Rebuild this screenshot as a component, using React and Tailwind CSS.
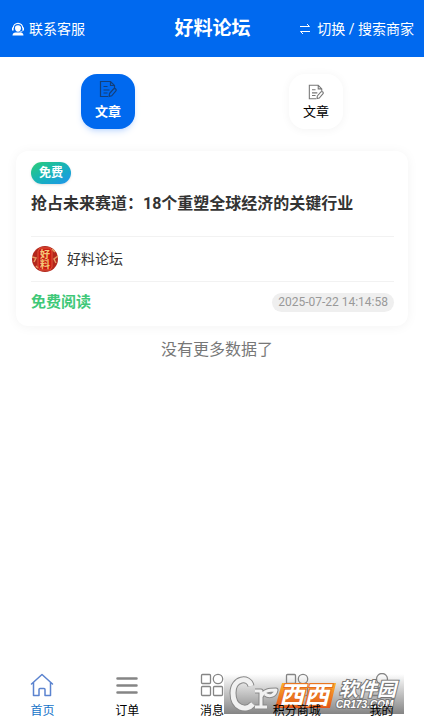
import { clsx } from 'clsx';

const navItems = [
  { label: '首页', icon: HomeIcon, active: true },
  { label: '订单', icon: OrdersIcon },
  { label: '消息', icon: GridIcon },
  { label: '积分商城', icon: GridIcon },
  { label: '我的', icon: UserIcon },
];

function SupportIcon() {
  return (
    <svg className="h-3.5 w-3.5" viewBox="0 0 14 14" fill="none" stroke="currentColor" aria-hidden="true">
      <path d="M2.3 6a4.700 4.700 0 0 1 9.400 0" strokeWidth="1.2" />
      <path d="M4 6.300a3 3 0 0 1 6-.3c0 2-1.300 3.800-3 3.800S4 8.200 4 6.300z" fill="currentColor" stroke="none" />
      <path d="M1.800 5.500v3M12.200 5.500v3" strokeWidth="1.600" />
      <path d="M11.800 8.500c-.6 1.200-1.600 1.500-3 1.500" strokeWidth=".9" />
      <path d="M1.500 13.500c0-2 1.400-2.700 3-3h5c1.600.3 3 1 3 3z" fill="currentColor" stroke="none" />
    </svg>
  );
}

function SwapIcon() {
  return (
    <svg className="h-3 w-3" viewBox="0 0 12 12" fill="none" stroke="currentColor" aria-hidden="true">
      <path d="M1 3.500h9.500L8 1M11 8.500H1.500L4 11" />
    </svg>
  );
}

function ArticleIcon({ className }) {
  return (
    <svg className={className} viewBox="0 0 18 18" fill="none" stroke="currentColor" strokeWidth="1.200" aria-hidden="true">
      <path d="M9 16.500H1.500v-15h10l4 4V8M11.500 1.500v4h4" />
      <path d="M4.500 6.500h4M4.500 10h6M4.500 13h4" />
      <path d="m10.500 13.500 4-4.500q1.200-1 2.200 0t0 2.200l-4 4.600-2.600.6z" />
    </svg>
  );
}

function HomeIcon() {
  return (
    <svg className="h-6 w-6" viewBox="0 0 24 24" fill="none" stroke="currentColor" strokeWidth="1.500" strokeLinejoin="round" strokeLinecap="round" aria-hidden="true">
      <path d="M1.500 11 12 1.500 22.500 11M3.500 9.500v13H9v-6q0-1 1-1h4q1 0 1 1v6h5.500v-13" />
    </svg>
  );
}

function OrdersIcon() {
  return (
    <svg className="h-6 w-6" viewBox="0 0 24 24" stroke="currentColor" strokeWidth="2.500" strokeLinecap="round" aria-hidden="true">
      <path d="M2.500 5.500h19M2.500 12.500h19M2.500 19.500h19" />
    </svg>
  );
}

function GridIcon() {
  return (
    <svg className="h-6 w-6" viewBox="0 0 24 24" fill="none" stroke="currentColor" strokeWidth="1.300" aria-hidden="true">
      <rect x="1.500" y="1.500" width="9" height="9" rx="1" />
      <circle cx="18" cy="6" r="4.700" />
      <rect x="1.500" y="13.500" width="9" height="9" rx="1" />
      <rect x="13.500" y="13.500" width="9" height="9" rx="1" />
    </svg>
  );
}

function UserIcon() {
  return (
    <svg className="h-6 w-6" viewBox="0 0 24 24" fill="none" stroke="currentColor" strokeWidth="1.300" aria-hidden="true">
      <circle cx="12" cy="6" r="5.500" />
      <path d="M2 22.500c0-5 4-8 10-8s10 3 10 8z" />
    </svg>
  );
}

function Avatar() {
  return (
    <svg className="h-7 w-7 rounded-full" viewBox="0 0 28 28" role="img" aria-label="好料论坛">
      <circle cx="14" cy="14" r="13" fill="#b3271c" />
      <path d="M1 12l4 1-2 4M27 11l-4 3 2 4M5 21l2 2M21 4l3 3" stroke="#e69a62" strokeWidth="1.500" fill="none" />
      <path d="M9 3h10l2 3v16l-2 3H9l-2-3V6z" fill="#cb1c12" stroke="#e2543a" />
      <text x="14" y="13" textAnchor="middle" fontSize="10" fontWeight="700" fill="#f4c979">好</text>
      <text x="14" y="23" textAnchor="middle" fontSize="10" fontWeight="700" fill="#f4c979">料</text>
    </svg>
  );
}

function Watermark() {
  return (
    <svg className="pointer-events-none absolute right-5 bottom-2.5 h-10 w-45" viewBox="0 0 180 40" aria-hidden="true">
      <defs>
        <linearGradient id="shade" x2="0" y2="1">
          <stop offset="0" stopColor="#777" stopOpacity="0" />
          <stop offset="1" stopColor="#777" stopOpacity=".9" />
        </linearGradient>
        <linearGradient id="orange" x2="0" y2="1">
          <stop offset="0" stopColor="#fbb02a" />
          <stop offset="1" stopColor="#e4521b" />
        </linearGradient>
      </defs>
      <rect width="180" height="40" fill="url(#shade)" />
      <g fill="none" strokeLinejoin="round">
        <g stroke="#888">
          <path d="M27 12C25 2 9 4 9 19s13 19 20 11" strokeWidth="7" />
          <path d="M31 17h6v16m-6 0h12M37 23c3-7 9-7 15-7-1 6-7 7-11 4" strokeWidth="5" />
        </g>
        <g stroke="#f1f1f1">
          <path d="M27 12C25 2 9 4 9 19s13 19 20 11" strokeWidth="5" />
          <path d="M31 17h6v16m-6 0h12M37 23c3-7 9-7 15-7-1 6-7 7-11 4" strokeWidth="3" />
        </g>
      </g>
      <path d="M58 9h26l-6 25H51zM86 9h26l-6 25H80z" fill="url(#orange)" />
      <g fontWeight="700" fontStyle="italic" stroke="#777" strokeWidth="2" paintOrder="stroke" fill="#fff">
        <text x="55" y="30" fontSize="25" stroke="#e66b1e">西西</text>
        <text x="115" y="22" fontSize="19">软件园</text>
        <text x="112" y="34" fontSize="10" fontFamily="Liberation Sans">CR173.COM</text>
      </g>
    </svg>
  );
}

export default function App() {
  return (
    <div className="flex min-h-screen flex-col bg-white font-['Roboto','Noto_Sans_CJK_SC',sans-serif] text-[#333]">
      <header className="grid h-[57px] grid-cols-[1fr_auto_1fr] items-center bg-[#0069ef] pr-2.5 pl-[11px] text-sm text-white">
        <button type="button" className="flex items-center gap-1 justify-self-start">
          <SupportIcon />
          联系客服
        </button>
        <h1 className="text-[19px] font-bold">好料论坛</h1>
        <button type="button" className="flex items-center gap-1.5 justify-self-end whitespace-nowrap">
          <SwapIcon />
          切换 / 搜索商家
        </button>
      </header>

      <main className="flex-1">
        <div className="grid grid-cols-2 px-1 pt-[17px] text-[13px] text-black">
          <button type="button" className="flex h-[55px] w-[54px] flex-col items-center gap-1 justify-self-center rounded-2xl bg-[#0069ef] pt-1.5 leading-5 font-bold text-white shadow-md shadow-blue-500/20">
            <ArticleIcon className="h-[18px] w-[18px] text-[#123f7b]" />
            文章
          </button>
          <button type="button" className="flex h-[55px] w-[54px] flex-col items-center gap-0.5 justify-self-center rounded-2xl bg-white pt-2.5 leading-5 shadow-[0_1px_10px_#0000000d]">
            <ArticleIcon className="h-4 w-4 text-[#777]" />
            文章
          </button>
        </div>

        <article className="mx-4 mt-[22px] rounded-xl bg-white pt-[11px] pr-3.5 pb-3 pl-[15px] shadow-[0_1px_12px_#0000000d]">
          <span className="block h-[22px] w-10 rounded-full bg-linear-to-br from-[#2fcc71] to-[#2492ee] text-center text-xs leading-[22px] font-bold text-white shadow-sm">免费</span>
          <h2 className="mt-2 pb-5 text-base leading-6 font-bold">抢占未来赛道：18个重塑全球经济的关键行业</h2>
          <div className="flex h-[46px] items-center gap-2 border-y border-[#f2f2f2] text-sm">
            <Avatar />
            好料论坛
          </div>
          <div className="flex items-center justify-between pt-2">
            <strong className="text-[15px] leading-6 text-[#3fc878]">免费阅读</strong>
            <time className="rounded-full bg-[#efefef] px-1.5 text-xs leading-[19px] text-[#999]">2025-07-22 14:14:58</time>
          </div>
        </article>
        <p className="pt-3 pl-2.5 text-center text-base leading-6 text-[#777]">没有更多数据了</p>
      </main>

      <nav className="relative grid grid-cols-5 pt-2 pb-[5px] text-xs text-black">
        {navItems.map(({ label, icon: Icon, active }) => (
          <a key={label} href="#" className={clsx('flex flex-col items-center gap-1.5', active && 'text-[#1673c8]')}>
            <span className={active ? 'text-[#5b83cf]' : 'text-[#858585]'}>
              <Icon />
            </span>
            <span className="z-10">{label}</span>
          </a>
        ))}
        <Watermark />
      </nav>
    </div>
  );
}
